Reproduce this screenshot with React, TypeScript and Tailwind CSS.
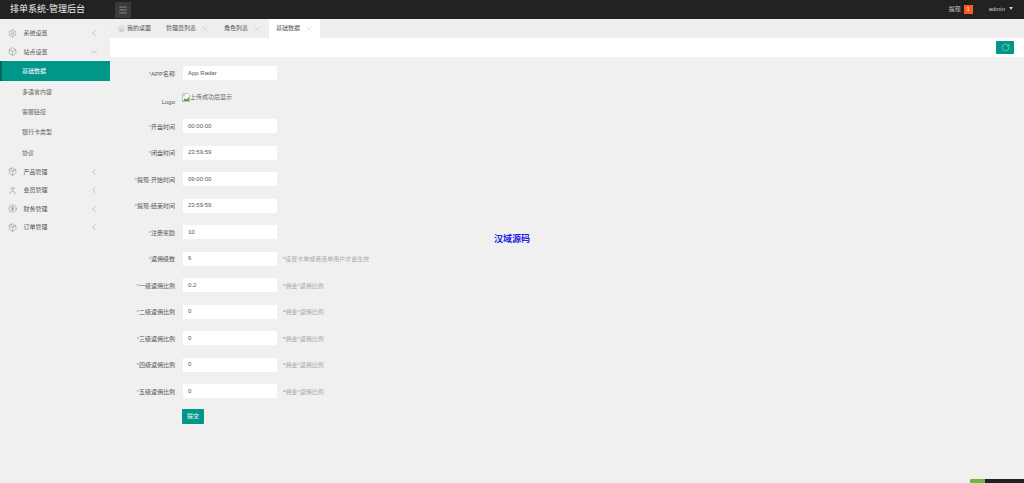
import { Box, ChevronDown, ChevronLeft, CircleDollarSign, Home, Menu, Package, RotateCw, Settings, User, X } from 'lucide-react';

const font = 'font-["Liberation_Sans","Noto_Sans_CJK_SC",sans-serif]';

const NavRow = ({ icon, label, open }: { icon: React.ReactNode; label: string; open?: boolean }) => (
  <div className="flex h-[18.4px] items-center pl-[8px] pr-[11px] text-[6px] text-[#555]">
    <span className="flex w-[15px] justify-start text-[#444]">{icon}</span>
    <span className="ml-[0.5px] flex-1 pt-[1px]">{label}</span>
    {open ? (
      <ChevronDown size={10} strokeWidth={0.8} className="text-[#666]" />
    ) : (
      <ChevronLeft size={10} strokeWidth={0.8} className="text-[#666]" />
    )}
  </div>
);

const SubRow = ({ label, active }: { label: string; active?: boolean }) => (
  <div
    className={
      active
        ? 'flex h-[20.4px] items-center border-l-2 border-[#00695c] bg-[#009688] pl-[20px] pt-[1.5px] text-[6px] text-white'
        : 'flex h-[20.4px] items-center pl-[22px] pt-[1.5px] text-[6px] text-[#666]'
    }
  >
    {label}
  </div>
);

const Sidebar = () => (
  <aside className="w-[110px] shrink-0 bg-[#f0f0f0] pt-[5px]">
    <NavRow icon={<Settings size={9} strokeWidth={0.8} />} label="系统设置" />
    <NavRow icon={<Box size={9} strokeWidth={0.8} />} label="站点设置" open />
    <SubRow label="基础数据" active />
    <SubRow label="多语言内容" />
    <SubRow label="客服链接" />
    <SubRow label="银行卡类型" />
    <SubRow label="协议" />
    <NavRow icon={<Package size={9} strokeWidth={0.8} />} label="产品管理" />
    <NavRow icon={<User size={9} strokeWidth={0.8} />} label="会员管理" />
    <NavRow icon={<CircleDollarSign size={9} strokeWidth={0.8} />} label="财务管理" />
    <NavRow icon={<Package size={9} strokeWidth={0.8} />} label="订单管理" />
  </aside>
);

const Tab = ({ label, active }: { label: string; active?: boolean }) => (
  <div
    className={
      active
        ? 'flex h-full w-[51px] items-center gap-[5px] bg-white pl-[7px] text-[6px] text-[#555]'
        : 'flex h-full w-[58px] items-center gap-[5px] pl-[8px] text-[6px] text-[#555]'
    }
  >
    <span className="whitespace-nowrap">{label}</span>
    <X size={8} strokeWidth={0.7} className="shrink-0 text-[#999]" />
  </div>
);

const Row = ({ label, value, hint, valueClass = 'text-[#555]' }: { label: string; value?: string; hint?: string; valueClass?: string }) => (
  <div className="mb-[12.5px] flex h-[14px] items-center">
    <label className="mt-[2.5px] w-[65px] text-right text-[6px] whitespace-nowrap text-[#555]">
      <span className="text-[#f56c6c]">*</span>
      {label}
    </label>
    <div className={`ml-[8px] flex h-[14px] w-[94px] items-center bg-white pl-[5px] text-[6px] ${valueClass}`}>{value}</div>
    {hint && <span className="ml-[6px] mt-[2.5px] text-[6px] whitespace-nowrap text-[#aaa]"><span className="text-[#f56c6c]">*</span>{hint}</span>}
  </div>
);

const BrokenImage = () => (
  <svg width="8" height="9" viewBox="0 0 8 9" className="shrink-0">
    <path d="M.5.5h5l2 2v6h-7z" fill="#fff" stroke="#999" strokeWidth=".6" />
    <path d="M1 8l2-3 1.500 1.500L7 4v4z" fill="#5a9e3f" />
    <rect x="1.200" y="1.500" width="2" height="2" fill="#a8c7ea" />
  </svg>
);

const commissionRows = [
  ['一级返佣比例', '0.2'],
  ['二级返佣比例', '0'],
  ['三级返佣比例', '0'],
  ['四级返佣比例', '0'],
  ['五级返佣比例', '0'],
];

export default function App() {
  return (
    <div className={`${font} relative flex h-[483px] w-[1024px] flex-col overflow-hidden bg-[#f0f0f0]`}>
      <header className="flex h-[19px] shrink-0 items-center bg-[#222] text-white">
        <span className="ml-[10px] w-[105px] text-[9px] text-[#eee]">排单系统-管理后台</span>
        <button className="flex h-[16px] w-[16px] items-center justify-center bg-[#3a3a3a]">
          <Menu size={10} strokeWidth={1.2} className="text-[#ddd]" />
        </button>
        <div className="ml-auto flex items-center pr-[11px] text-[6px] text-[#ccc]">
          <span>提现</span>
          <span className="ml-[3px] flex h-[9px] w-[9px] items-center justify-center bg-[#ff5722] text-white">1</span>
          <span className="ml-[16px]">admin</span>
          <span className="ml-[4px] mb-[2px] h-0 w-0 border-x-[2.5px] border-t-[3px] border-x-transparent border-t-[#ccc]" />
        </div>
      </header>
      <div className="flex flex-1">
        <Sidebar />
        <main className="flex-1">
          <div className="flex h-[19px] items-center bg-[#eeeeee]">
            <div className="flex h-full w-[48px] items-center gap-[2px] pl-[8px] text-[6px] whitespace-nowrap text-[#555]">
              <Home size={7} strokeWidth={0.8} className="shrink-0 text-[#666]" />
              <span>我的桌面</span>
            </div>
            <div className="flex h-full">
              <Tab label="管理员列表" />
              <Tab label="角色列表" />
              <div className="ml-[-5px]">
                <Tab label="基础数据" active />
              </div>
            </div>
          </div>
          <div className="flex h-[19px] items-center justify-end bg-white pr-[10px]">
            <button className="flex h-[13px] w-[18px] items-center justify-center rounded-[1px] bg-[#009688]">
              <RotateCw size={9} strokeWidth={1} className="text-white" />
            </button>
          </div>
          <form className="pt-[9px]">
            <Row label="APP名称" value="App Radar" />
            <div className="mb-[12.5px] flex h-[14px]">
              <label className="mt-[5px] w-[65px] text-right text-[6px] text-[#555]">Logo</label>
              <div className="ml-[7px] flex h-[9px] items-center text-[6px] whitespace-nowrap text-[#666]">
                <BrokenImage />
                <span>上传成功后显示</span>
              </div>
            </div>
            <Row label="开盘时间" value="00:00:00" />
            <Row label="闭盘时间" value="23:59:59" />
            <Row label="提现-开始时间" value="09:00:00" />
            <Row label="提现-结束时间" value="23:59:59" />
            <Row label="注册奖励" value="10" valueClass="text-[#2a5a8a]" />
            <Row label="返佣级数" value="6" hint="设置卡单或者连单用户才会生效" />
            {commissionRows.map(([label, value]) => (
              <Row key={label} label={label} value={value} hint="佣金*返佣比例" />
            ))}
            <button type="button" className="ml-[72px] -mt-[2px] flex h-[15px] w-[22px] items-center justify-center rounded-[1px] bg-[#009688] text-[6px] text-white">
              提交
            </button>
          </form>
        </main>
      </div>
      <div className="absolute left-[494px] top-[233px] text-[9px] font-bold text-[#1a1aee]">汉域源码</div>
      <div className="absolute right-0 bottom-0 flex h-[4px]">
        <div className="w-[15px] rounded-tl-[1px] bg-[#6cbb3c]" />
        <div className="w-[39px] bg-[#222]" />
      </div>
    </div>
  );
}
